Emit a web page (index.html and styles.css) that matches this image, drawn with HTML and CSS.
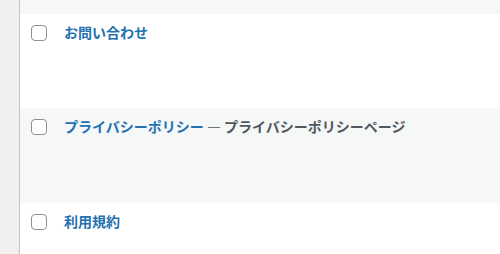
FILE: index.html
```html
<!DOCTYPE html>
<html lang="ja">
<head>
<meta charset="utf-8">
<link rel="stylesheet" href="styles.css">
</head>
<body>
<div class="wrap">
  <div class="side"></div>
  <div class="table">
    <div class="row row-top"></div>
    <div class="row row-1">
      <span class="check"></span>
      <div class="title"><a class="link">お問い合わせ</a></div>
    </div>
    <div class="row row-2 alt">
      <span class="check"></span>
      <div class="title"><a class="link">プライバシーポリシー</a> <span class="state">— プライバシーポリシーページ</span></div>
    </div>
    <div class="row row-3">
      <span class="check"></span>
      <div class="title"><a class="link">利用規約</a></div>
    </div>
  </div>
</div>
</body>
</html>
```
FILE: styles.css
```css
html, body {
  margin: 0;
  padding: 0;
  height: 100%;
}
body {
  font-family: "Noto Sans CJK JP", "Noto Sans", sans-serif;
  font-size: 14px;
  line-height: 20px;
  background: #f0f0f1;
  overflow: hidden;
}
.wrap {
  display: flex;
  height: 254px;
}
.side {
  width: 19px;
  background: #f0f0f1;
}
.table {
  flex: 1;
  border-left: 1px solid #c3c4c7;
  background: #fff;
  display: flex;
  flex-direction: column;
}
.row {
  display: flex;
  align-items: flex-start;
  padding-left: 11px;
  box-sizing: border-box;
}
.row-top {
  height: 14px;
  background: #f6f7f7;
}
.row-1 { height: 94px; }
.row-2 { height: 95px; }
.row-3 { flex: 1; }
.alt { background: #f6f7f7; }
.check {
  width: 16px;
  height: 16px;
  box-sizing: border-box;
  border: 1px solid #8c8f94;
  border-radius: 4px;
  background: #fff;
  margin-top: 11px;
  flex: none;
}
.title {
  margin-left: 17px;
  padding-top: 8px;
  font-weight: 700;
  white-space: nowrap;
}
.link {
  color: #2271b1;
  text-decoration: none;
}
.state {
  color: #50575e;
}
```
